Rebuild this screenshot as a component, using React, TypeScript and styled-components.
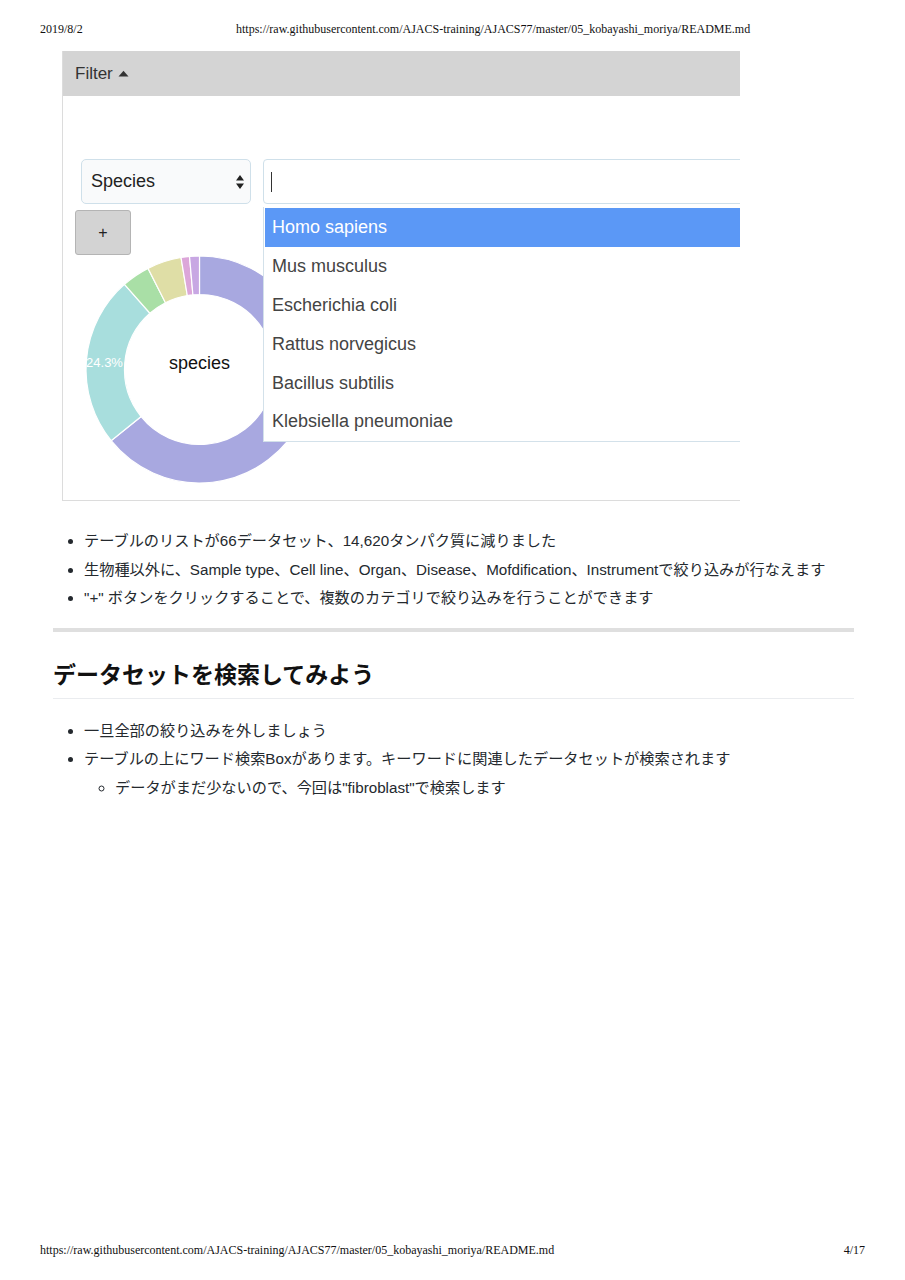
import React from "react";
import styled, { createGlobalStyle } from "styled-components";

const GlobalStyle = createGlobalStyle`
  html, body { margin: 0; padding: 0; background: #fff; }
  body { width: 905px; }
  * { box-sizing: border-box; }
`;

const Page = styled.div`
  width: 905px;
  min-height: 1280px;
  display: flex;
  flex-direction: column;
  font-family: "Liberation Sans", "Noto Sans CJK JP", sans-serif;
  color: #24292e;
`;

const PrintBar = styled.div<{ $top?: boolean }>`
  display: flex;
  align-items: center;
  padding: ${(p) => (p.$top ? "22px 40px 0 40px" : "0 40px 23px 40px")};
  margin-top: ${(p) => (p.$top ? "0" : "auto")};
  font-family: "Liberation Serif", serif;
  font-size: 12px;
  line-height: 14px;
  color: #111;
`;

const PrintDate = styled.span`
  width: 196px;
`;

const PrintSpacer = styled.span`
  flex: 1;
`;

const Content = styled.div`
  padding: 0 51px 0 53px;
`;

const Shot = styled.div`
  margin: 15px 0 0 9px;
  width: 678px;
  border-left: 1px solid #dcdcdc;
  border-bottom: 1px solid #dcdcdc;
  overflow: hidden;
  font-family: "Liberation Sans", sans-serif;
`;

const ShotHeader = styled.div`
  height: 45px;
  background: #d4d4d4;
  display: flex;
  align-items: center;
  padding-left: 12px;
  font-size: 17px;
  color: #333;
  gap: 5px;
`;

const ShotBody = styled.div`
  padding: 63px 0 15px 12px;
  display: flex;
  flex-direction: column;
  align-items: flex-start;
`;

const FilterRow = styled.div`
  display: flex;
  gap: 12px;
  margin-left: 6px;
  height: 45px;
`;

const SelectBox = styled.div`
  width: 170px;
  height: 45px;
  border: 1px solid #cfe0ea;
  border-radius: 5px;
  background: #f9fafb;
  display: flex;
  align-items: center;
  justify-content: space-between;
  padding: 0 5px 0 9px;
  font-size: 18px;
  color: #222;
`;

const InputWrap = styled.div`
  position: relative;
  width: 620px;
`;

const InputBox = styled.div`
  height: 45px;
  border: 1px solid #cfe0ea;
  border-radius: 4px;
  background: #fff;
  display: flex;
  align-items: center;
  padding-left: 7px;
`;

const Caret = styled.span`
  width: 1px;
  height: 20px;
  background: #333;
`;

const Menu = styled.ul`
  position: absolute;
  top: 48px;
  left: 0;
  width: 100%;
  margin: 0;
  padding: 1px 0 0 1px;
  list-style: none;
  background: #fff;
  border: 1px solid #d3e1ea;
  border-top: none;
  z-index: 2;
`;

const MenuItem = styled.li<{ $active?: boolean }>`
  height: 38.9px;
  display: flex;
  align-items: center;
  padding-left: 7px;
  font-size: 18px;
  color: ${(p) => (p.$active ? "#fff" : "#444")};
  background: ${(p) => (p.$active ? "#5b98f6" : "transparent")};
`;

const PlusButton = styled.div`
  margin-top: 6px;
  width: 56px;
  height: 45px;
  background: #d3d3d3;
  border: 1px solid #b4b4b4;
  border-radius: 3px;
  display: flex;
  align-items: center;
  justify-content: center;
  font-size: 16px;
  color: #222;
`;

const Chart = styled.svg`
  display: block;
`;

const List = styled.ul<{ $nested?: boolean; $top?: number }>`
  margin: ${(p) => (p.$top ?? 0)}px 0 0 0;
  padding-left: 31px;
  list-style: ${(p) => (p.$nested ? "circle" : "disc")};
  font-size: 15.2px;
  line-height: 28.5px;
  color: #24292e;
`;

const Item = styled.li``;

const ThickRule = styled.div`
  margin-top: 15px;
  height: 4px;
  background: #dfdfdf;
`;

const Heading = styled.h2`
  margin: 28px 0 0 0;
  padding-bottom: 8px;
  border-bottom: 1px solid #eaecef;
  font-size: 23px;
  line-height: 30px;
  font-weight: 600;
  color: #111;
`;

const ITEMS = [
  "Homo sapiens",
  "Mus musculus",
  "Escherichia coli",
  "Rattus norvegicus",
  "Bacillus subtilis",
  "Klebsiella pneumoniae",
];

const SEGMENTS = [
  { v: 0.642, c: "#a8a8e0" },
  { v: 0.243, c: "#a8dedd" },
  { v: 0.04, c: "#a9dfa6" },
  { v: 0.049, c: "#dfdea6" },
  { v: 0.012, c: "#dca6d9" },
  { v: 0.014, c: "#c8a7e3" },
];

function arcPath(cx: number, cy: number, ro: number, ri: number, a0: number, a1: number) {
  const rad = (d: number) => (d * Math.PI) / 180;
  const p = (r: number, a: number) => [cx + r * Math.sin(rad(a)), cy - r * Math.cos(rad(a))];
  const large = a1 - a0 > 180 ? 1 : 0;
  const [x0, y0] = p(ro, a0);
  const [x1, y1] = p(ro, a1);
  const [x2, y2] = p(ri, a1);
  const [x3, y3] = p(ri, a0);
  return `M${x0},${y0} A${ro},${ro} 0 ${large} 1 ${x1},${y1} L${x2},${y2} A${ri},${ri} 0 ${large} 0 ${x3},${y3} Z`;
}

function Donut() {
  const cx = 124.5;
  const cy = 114.5;
  let acc = 0;
  const paths = SEGMENTS.map((s, i) => {
    const a0 = acc * 360;
    acc += s.v;
    const a1 = acc * 360;
    return (
      <path key={i} d={arcPath(cx, cy, 113.5, 75, a0, a1)} fill={s.c} stroke="#fff" strokeWidth={1.2} />
    );
  });
  return (
    <Chart width={260} height={230} viewBox="0 0 260 230">
      {paths}
      <text x={cx - 95} y={cy - 6} fill="#fff" fontSize={13} fontFamily="Liberation Sans, sans-serif" textAnchor="middle" dominantBaseline="middle">
        24.3%
      </text>
      <text x={cx} y={cy - 5} fill="#111" fontSize={18} fontFamily="Liberation Sans, sans-serif" textAnchor="middle" dominantBaseline="middle">
        species
      </text>
    </Chart>
  );
}

export default function App() {
  return (
    <>
      <GlobalStyle />
      <Page>
        <PrintBar $top>
          <PrintDate>2019/8/2</PrintDate>
          <span>https://raw.githubusercontent.com/AJACS-training/AJACS77/master/05_kobayashi_moriya/README.md</span>
        </PrintBar>
        <Content>
          <Shot>
            <ShotHeader>
              Filter
              <svg width="11" height="7" viewBox="0 0 11 7">
                <path d="M0.5 6.5 L5.5 0.8 L10.5 6.5 Z" fill="#333" />
              </svg>
            </ShotHeader>
            <ShotBody>
              <FilterRow>
                <SelectBox>
                  Species
                  <svg width="10" height="16" viewBox="0 0 10 16">
                    <path d="M1 6.5 L5 1 L9 6.5 Z M1 9.5 L5 15 L9 9.5 Z" fill="#222" />
                  </svg>
                </SelectBox>
                <InputWrap>
                  <InputBox>
                    <Caret />
                  </InputBox>
                  <Menu>
                    {ITEMS.map((t, i) => (
                      <MenuItem key={t} $active={i === 0}>
                        {t}
                      </MenuItem>
                    ))}
                  </Menu>
                </InputWrap>
              </FilterRow>
              <PlusButton>+</PlusButton>
              <Donut />
            </ShotBody>
          </Shot>
          <List $top={26}>
            <Item>テーブルのリストが66データセット、14,620タンパク質に減りました</Item>
            <Item>生物種以外に、Sample type、Cell line、Organ、Disease、Mofdification、Instrumentで絞り込みが行なえます</Item>
            <Item>"+" ボタンをクリックすることで、複数のカテゴリで絞り込みを行うことができます</Item>
          </List>
          <ThickRule />
          <Heading>データセットを検索してみよう</Heading>
          <List $top={18}>
            <Item>一旦全部の絞り込みを外しましょう</Item>
            <Item>
              テーブルの上にワード検索Boxがあります。キーワードに関連したデータセットが検索されます
              <List $nested>
                <Item>データがまだ少ないので、今回は"fibroblast"で検索します</Item>
              </List>
            </Item>
          </List>
        </Content>
        <PrintBar>
          <span>https://raw.githubusercontent.com/AJACS-training/AJACS77/master/05_kobayashi_moriya/README.md</span>
          <PrintSpacer />
          <span>4/17</span>
        </PrintBar>
      </Page>
    </>
  );
}
